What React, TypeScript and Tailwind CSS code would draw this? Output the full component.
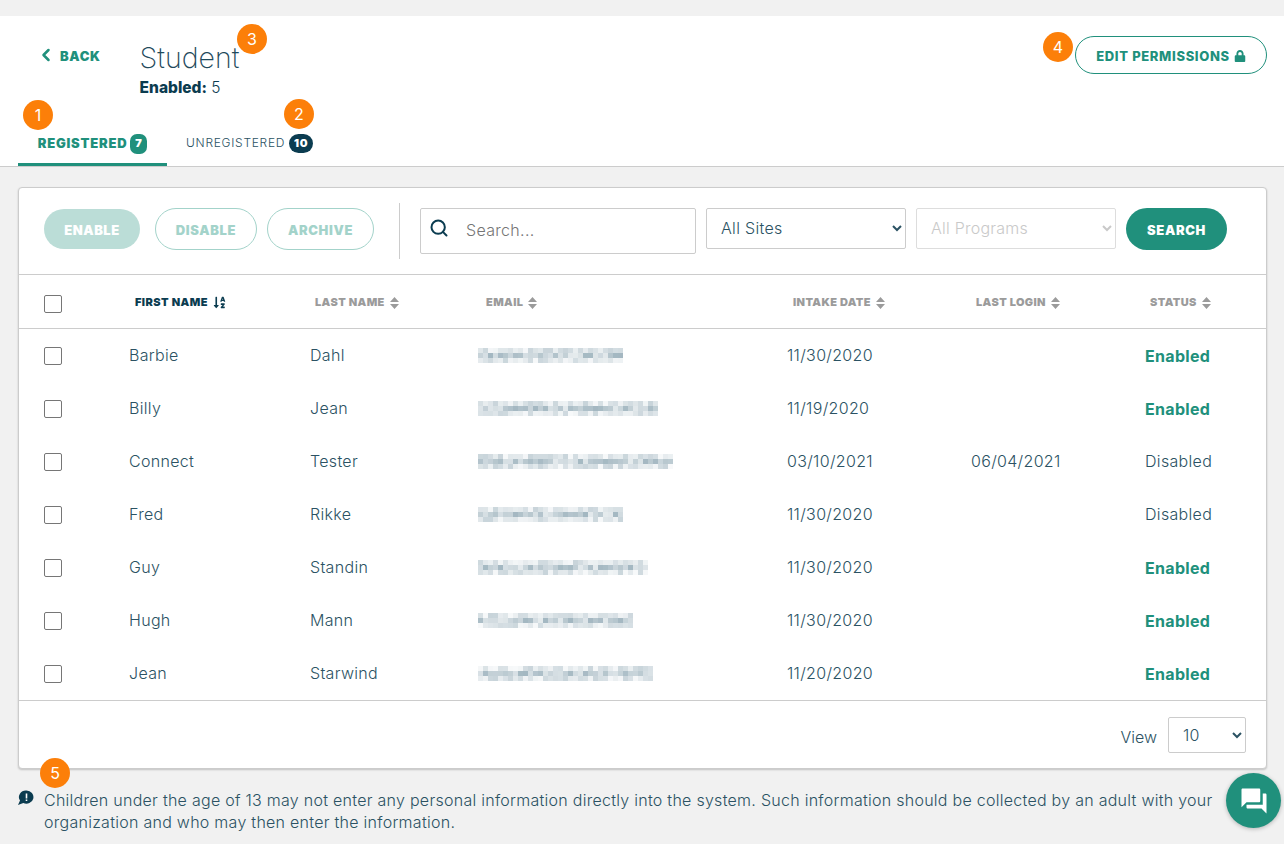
import { ChevronLeft, Search } from 'lucide-react'
import { FaLock, FaSortAlphaDown } from 'react-icons/fa'
import { MdQuestionAnswer } from 'react-icons/md'

const font = { fontFamily: '"Inter", "Liberation Sans", sans-serif' }

type Student = { first: string; last: string; emailCells: number; seed: number; intake: string; login: string; status: 'Enabled' | 'Disabled' }

const students: Student[] = [
  { first: 'Barbie', last: 'Dahl', emailCells: 29, seed: 3, intake: '11/30/2020', login: '', status: 'Enabled' },
  { first: 'Billy', last: 'Jean', emailCells: 36, seed: 11, intake: '11/19/2020', login: '', status: 'Enabled' },
  { first: 'Connect', last: 'Tester', emailCells: 39, seed: 17, intake: '03/10/2021', login: '06/04/2021', status: 'Disabled' },
  { first: 'Fred', last: 'Rikke', emailCells: 29, seed: 23, intake: '11/30/2020', login: '', status: 'Disabled' },
  { first: 'Guy', last: 'Standin', emailCells: 34, seed: 31, intake: '11/30/2020', login: '', status: 'Enabled' },
  { first: 'Hugh', last: 'Mann', emailCells: 31, seed: 41, intake: '11/30/2020', login: '', status: 'Enabled' },
  { first: 'Jean', last: 'Starwind', emailCells: 35, seed: 47, intake: '11/20/2020', login: '', status: 'Enabled' },
]

const columns = 'grid grid-cols-[110px_181px_168px_309px_184px_174px_1fr] items-center'

function SortIcon() {
  return (
    <svg width="9" height="12" viewBox="0 0 9 12" className="ml-[5px] fill-[#9b9b9b]">
      <path d="M4.5 0 L9 5 H0 Z M0 7 H9 L4.5 12 Z" />
    </svg>
  )
}

// the emails are pixelated in the screenshot, so draw the mosaic
function BlurredEmail({ cells, seed }: { cells: number; seed: number }) {
  const shade = (row: number, col: number) => {
    const n = Math.sin(seed * 12.9 + col * 78.2 + row * 37.7) * 43758.5
    const r = n - Math.floor(n)
    const strength = row === 1 ? 0.14 + r * 0.36 : 0.04 + r * 0.26
    return `rgba(70, 110, 130, ${strength})`
  }
  return (
    <div className="flex flex-col" aria-hidden="true">
      {[0, 1, 2].map((row) => (
        <div key={row} className="flex">
          {Array.from({ length: cells }, (_, col) => (
            <span key={col} className="block w-[5px] h-[5px]" style={{ backgroundColor: shade(row, col) }} />
          ))}
        </div>
      ))}
    </div>
  )
}

function Marker({ n, className }: { n: number; className: string }) {
  return (
    <span className={`absolute flex items-center justify-center w-[30px] h-[30px] rounded-full bg-[#fc7f09] text-white text-[16px] ${className}`}>
      {n}
    </span>
  )
}

function Checkbox() {
  return <input type="checkbox" className="appearance-none block w-[18px] h-[18px] bg-white border border-[#767676] rounded-[2px]" />
}

function HeaderCell({ label, className = '' }: { label: string; className?: string }) {
  return (
    <div className={`flex items-center text-[11px] font-black tracking-[0.035em] text-[#9b9b9b] ${className}`}>
      {label}
      <SortIcon />
    </div>
  )
}

export default function App() {
  return (
    <div style={font} className="relative h-[844px] overflow-hidden bg-[#f1f1f1] pt-4 text-[#2b5263]">
      <header className="h-[151px] bg-white border-b border-[#cccccc] flex flex-col">
        <div className="flex flex-1 items-start">
          <a className="flex items-center ml-[36px] mt-[28px] pt-[1px] h-[24px] text-[13px] font-black tracking-[0.05em] text-[#20907c]">
            <ChevronLeft size={20} strokeWidth={3} className="mr-[4px] -mt-[4px]" />
            BACK
          </a>
          <div className="ml-[39px] mt-[23px]">
            <h1 className="text-[28.5px] leading-[38px] font-extralight text-[#1f4a5c]">Student</h1>
            <p className="text-[15.5px] leading-[20px] mt-[1px] font-light text-[#0b3c50]">
              <span className="font-extrabold">Enabled:</span> 5
            </p>
          </div>
          <button className="ml-auto mr-[17px] mt-[20px] pt-[4px] flex items-center justify-center w-[192px] h-[38px] rounded-[19px] bg-white border border-[#20907c] text-[13px] font-extrabold tracking-[0.05em] text-[#20907c]">
            EDIT PERMISSIONS
            <FaLock size={12} className="ml-[4px] -mt-[2px]" />
          </button>
        </div>
        <nav className="flex ml-[18px] h-[38px]">
          <div className="flex items-center justify-center w-[149px] pb-[4px] border-b-[3px] border-[#20907c] text-[13px] font-black tracking-[0.06em] text-[#20907c]">
            REGISTERED
            <span className="ml-[3px] flex items-center justify-center w-[17px] h-[20px] rounded-[7px] bg-[#20907c] text-white text-[11px] font-black">7</span>
          </div>
          <div className="flex items-center ml-[19px] pb-[8px] text-[12px] font-light tracking-[0.06em] text-[#2b5263]">
            UNREGISTERED
            <span className="ml-[4px] flex items-center justify-center w-[24px] h-[19px] rounded-[10px] bg-[#0b3c50] text-white text-[11px] font-black">10</span>
          </div>
        </nav>
      </header>

      <main className="ml-[18px] mr-[17px] mt-[20px] h-[582px] bg-white border border-[#cccccc] rounded-[4px] shadow-[0_1px_2px_rgba(0,0,0,0.2)] flex flex-col">
        <div className="h-[87px] flex items-start border-b border-[#cccccc] pl-[25px]">
          <button className="mt-[21px] pt-[3px] w-[96px] h-[40px] rounded-[20px] bg-[#bbddd7] text-white text-[13px] font-black tracking-[0.04em]">ENABLE</button>
          <button className="mt-[20px] pt-[3px] ml-[15px] w-[102px] h-[42px] rounded-[21px] border border-[#a3d3ca] text-[#a3d3ca] text-[13px] font-black tracking-[0.05em]">DISABLE</button>
          <button className="mt-[20px] pt-[3px] ml-[10px] w-[107px] h-[42px] rounded-[21px] border border-[#a3d3ca] text-[#a3d3ca] text-[13px] font-black tracking-[0.05em]">ARCHIVE</button>
          <div className="mt-[15px] ml-[25px] w-px h-[56px] bg-[#cccccc]" />
          <label className="mt-[20px] ml-[20px] flex items-center w-[276px] h-[46px] border border-[#cccccc] rounded-[2px] pl-[8px]">
            <Search size={20} strokeWidth={2.4} className="text-[#0b3c50] -mt-[6px] shrink-0" />
            <input placeholder="Search..." className="ml-[17px] mb-[2px] w-[200px] text-[16px] tracking-[0.02em] font-light outline-none placeholder:text-[#757575]" />
          </label>
          <select className="mt-[20px] ml-[10px] w-[200px] h-[41px] pl-[10px] pb-[2px] bg-white border border-[#cccccc] rounded-[2px] text-[16px] tracking-[0.02em] font-light text-[#2b5263]">
            <option>All Sites</option>
          </select>
          <select disabled className="mt-[20px] ml-[10px] w-[200px] h-[41px] pl-[10px] pb-[2px] bg-white border border-[#dddddd] rounded-[2px] text-[16px] tracking-[0.015em] font-light text-[#c9c9c9] opacity-100">
            <option>All Programs</option>
          </select>
          <button className="mt-[20px] pt-[3px] ml-[10px] w-[101px] h-[42px] rounded-[21px] bg-[#20907c] text-white text-[13px] font-black tracking-[0.05em]">SEARCH</button>
        </div>

        <div className={`${columns} h-[54px] pt-[2px] border-b border-[#cccccc]`}>
          <div className="pl-[25px] mt-[2px]"><Checkbox /></div>
          <div className="flex items-center pl-[6px] text-[11px] font-black tracking-[0.04em] text-[#0b3c50]">
            FIRST NAME
            <FaSortAlphaDown size={13} className="ml-[5px]" />
          </div>
          <HeaderCell label="LAST NAME" className="pl-[5px]" />
          <HeaderCell label="EMAIL" className="pl-[8px]" />
          <HeaderCell label="INTAKE DATE" className="pl-[6px]" />
          <HeaderCell label="LAST LOGIN" className="pl-[5px]" />
          <HeaderCell label="STATUS" className="pl-[5px]" />
        </div>

        <div className="h-[372px] flex flex-col border-b border-[#cccccc]">
          {students.map((s) => (
            <div key={s.first} className={`${columns} h-[53px] text-[16px] tracking-[0.02em] font-light`}>
              <div className="pl-[25px]"><Checkbox /></div>
              <div className="-mt-[1px]">{s.first}</div>
              <div className="-mt-[1px]">{s.last}</div>
              <div><BlurredEmail cells={s.emailCells} seed={s.seed} /></div>
              <div className="-mt-[1px]">{s.intake}</div>
              <div className="-mt-[1px]">{s.login}</div>
              <div className={s.status === 'Enabled' ? 'mt-[1px] font-bold text-[#20907c]' : '-mt-[1px]'}>{s.status}</div>
            </div>
          ))}
        </div>

        <div className="flex-1 flex items-center justify-end pr-[20px]">
          <span className="pt-[4px] text-[16px] font-light">View</span>
          <select className="ml-[11px] w-[78px] h-[36px] pl-[10px] bg-white border border-[#cccccc] rounded-[2px] text-[16px] tracking-[0.02em] font-light text-[#2b5263]">
            <option>10</option>
          </select>
        </div>
      </main>

      <footer className="flex mt-[20px] ml-[17px]">
        <svg width="17" height="16" viewBox="0 0 17 16" className="mt-[1px] shrink-0">
          <path d="M9.5 0.5 a7 6.6 0 1 1 -3.2 12.5 L1 15 L3 10.6 A7 6.6 0 0 1 9.5 0.5 Z" fill="#0b3c50" />
          <path d="M8.7 3.5 h1.6 v5 h-1.6 Z M8.7 9.5 h1.6 v1.6 h-1.6 Z" fill="white" />
        </svg>
        <p className="ml-[10px] w-[1178px] text-[16px] tracking-[0.27px] leading-[22px] font-light">
          Children under the age of 13 may not enter any personal information directly into the system. Such information should be collected by an adult with your organization and who may then enter the information.
        </p>
      </footer>

      <Marker n={3} className="left-[237px] top-[24px]" />
      <Marker n={1} className="left-[23px] top-[100px]" />
      <Marker n={2} className="left-[284px] top-[99px]" />
      <Marker n={4} className="left-[1043px] top-[32px]" />
      <Marker n={5} className="left-[40px] top-[758px]" />

      <button className="absolute left-[1226px] top-[773px] flex items-center justify-center w-[55px] h-[55px] rounded-full bg-[#20907c] text-white shadow-[0_1px_4px_rgba(0,0,0,0.25)]">
        <MdQuestionAnswer size={30} />
      </button>
    </div>
  )
}
